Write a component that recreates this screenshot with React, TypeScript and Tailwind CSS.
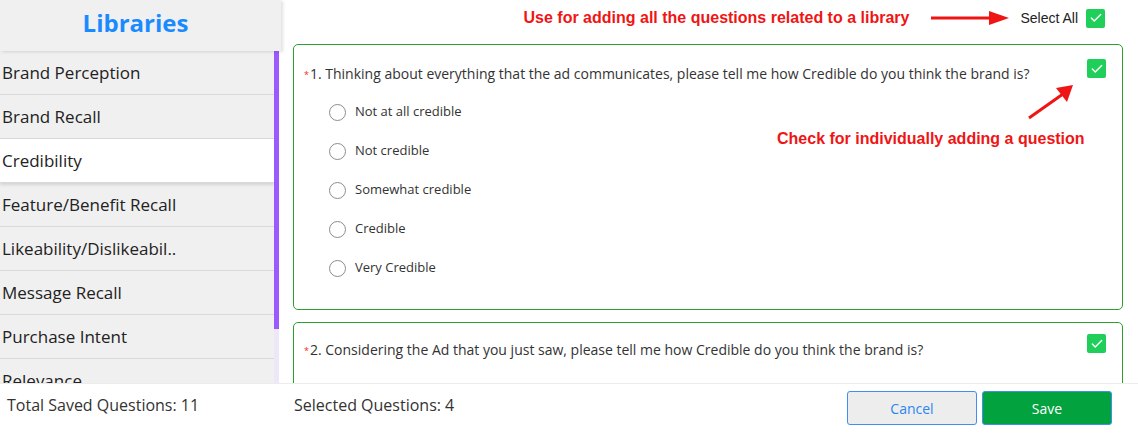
import { Check } from "lucide-react"

const libraries = [
  "Brand Perception",
  "Brand Recall",
  "Credibility",
  "Feature/Benefit Recall",
  "Likeability/Dislikeabil..",
  "Message Recall",
  "Purchase Intent",
  "Relevance",
]

const options = ["Not at all credible", "Not credible", "Somewhat credible", "Credible", "Very Credible"]

function GreenCheck() {
  return (
    <span className="flex h-[19px] w-[19px] items-center justify-center rounded-[2px] bg-[#1fcf59]">
      <Check className="h-[14px] w-[14px] text-white" strokeWidth={2.5} />
    </span>
  )
}

function Radio() {
  return <span className="h-[17px] w-[17px] shrink-0 rounded-full border-[1.5px] border-[#8c8c8c] bg-white" />
}

function QuestionTitle({ text }: { text: string }) {
  return (
    <p className="text-[14px] leading-[18px] text-[#333]">
      <span className="relative -top-[1px] mr-[1px] text-[9px] text-[#f22]">*</span>
      {text}
    </p>
  )
}

export default function App() {
  return (
    <div className="flex h-[435px] w-[1138px] flex-col overflow-hidden bg-white font-['Open_Sans',sans-serif]">
      <div className="flex h-[383px]">
        {/* sidebar */}
        <aside className="flex w-[279px] shrink-0 flex-col">
          <div className="relative z-10 flex h-[51px] w-[281px] items-center justify-center bg-[#f0f0f0] pb-[5px] shadow-[2px_1px_3px_rgba(0,0,0,0.12)]">
            <h1 className="pr-[10px] text-[24px] font-bold text-[#1a8bff]">Libraries</h1>
          </div>
          <div className="flex min-h-0 flex-1">
            <ul className="w-[274px] overflow-hidden">
              {libraries.map((lib) => (
                <li
                  key={lib}
                  className={
                    lib === "Credibility"
                      ? "relative flex h-[44px] items-center border-b border-[#dcd8d8] bg-white pl-[2px] text-[17px] text-[#222] shadow-[0_2px_3px_rgba(0,0,0,0.12)]"
                      : "flex h-[44px] items-center border-b border-[#dcd8d8] bg-[#f0f0f0] pl-[2px] text-[17px] text-[#222]"
                  }
                >
                  {lib}
                </li>
              ))}
            </ul>
            <div className="flex w-[5px] flex-col bg-[#ece8f8]">
              <div className="h-[278px] bg-[#9b59ff]" />
            </div>
          </div>
        </aside>

        {/* questions */}
        <main className="relative flex min-w-0 flex-1 flex-col overflow-hidden">
          <div className="flex h-[44px] shrink-0 items-center justify-end pb-[8px] pr-[33px] font-['Liberation_Sans',Arial,sans-serif]">
            <span className="text-[16px] font-bold text-[#f01515]">Use for adding all the questions related to a library</span>
            <svg className="ml-[22px]" width="78" height="14" viewBox="0 0 78 14">
              <line x1="0" y1="7" x2="62" y2="7" stroke="#f01515" strokeWidth="3" />
              <polygon points="58,0 78,7 58,14" fill="#f01515" />
            </svg>
            <span className="ml-[11px] text-[14px] text-[#222]">Select All</span>
            <span className="ml-[8px]">
              <GreenCheck />
            </span>
          </div>

          <div className="ml-[14px] mr-[15px] flex flex-col gap-[12px]">
            <section className="flex h-[266px] shrink-0 flex-col rounded-[5px] border border-[#2e9e2e] pl-[10px] pr-[16px] pt-[14px]">
              <div className="flex items-start justify-between">
                <div className="pt-[6px]">
                  <QuestionTitle text="1. Thinking about everything that the ad communicates, please tell me how Credible do you think the brand is?" />
                </div>
                <GreenCheck />
              </div>
              <ul className="mt-[18px] flex flex-col gap-[21px] pl-[25px]">
                {options.map((o) => (
                  <li key={o} className="flex h-[18px] items-center gap-[9px] text-[13px] text-[#333]">
                    <Radio />
                    {o}
                  </li>
                ))}
              </ul>
            </section>

            <section className="flex h-[120px] shrink-0 flex-col rounded-[5px] border border-[#2e9e2e] pl-[10px] pr-[16px] pt-[11px]">
              <div className="flex items-start justify-between">
                <div className="pt-[7px]">
                  <QuestionTitle text="2. Considering the Ad that you just saw, please tell me how Credible do you think the brand is?" />
                </div>
                <GreenCheck />
              </div>
            </section>
          </div>

          {/* annotation for the single question checkbox */}
          <svg className="absolute left-[746px] top-[82px]" width="52" height="40" viewBox="0 0 52 40">
            <line x1="4" y1="36" x2="38" y2="12" stroke="#f01515" strokeWidth="3" />
            <polygon points="48,3 42,20 31,6" fill="#f01515" />
          </svg>
          <span className="absolute left-[498px] top-[127px] font-['Liberation_Sans',Arial,sans-serif] text-[16px] font-bold text-[#f01515]">
            Check for individually adding a question
          </span>
        </main>
      </div>

      {/* footer */}
      <footer className="flex h-[52px] shrink-0 items-start border-t border-[#ececec] text-[16px] text-[#333]">
        <span className="w-[294px] pl-[7px] pt-[9px]">Total Saved Questions: 11</span>
        <span className="pt-[9px]">Selected Questions: 4</span>
        <div className="ml-auto mr-[26px] mt-[7px] flex gap-[5px] text-[14px]">
          <button className="h-[34px] w-[130px] rounded-[3px] border border-[#3d8ef5] bg-[#ededed] text-[#2a86f0]">Cancel</button>
          <button className="h-[34px] w-[130px] rounded-[3px] border border-[#3d8ef5] bg-[#02a33e] text-white">Save</button>
        </div>
      </footer>
    </div>
  )
}
